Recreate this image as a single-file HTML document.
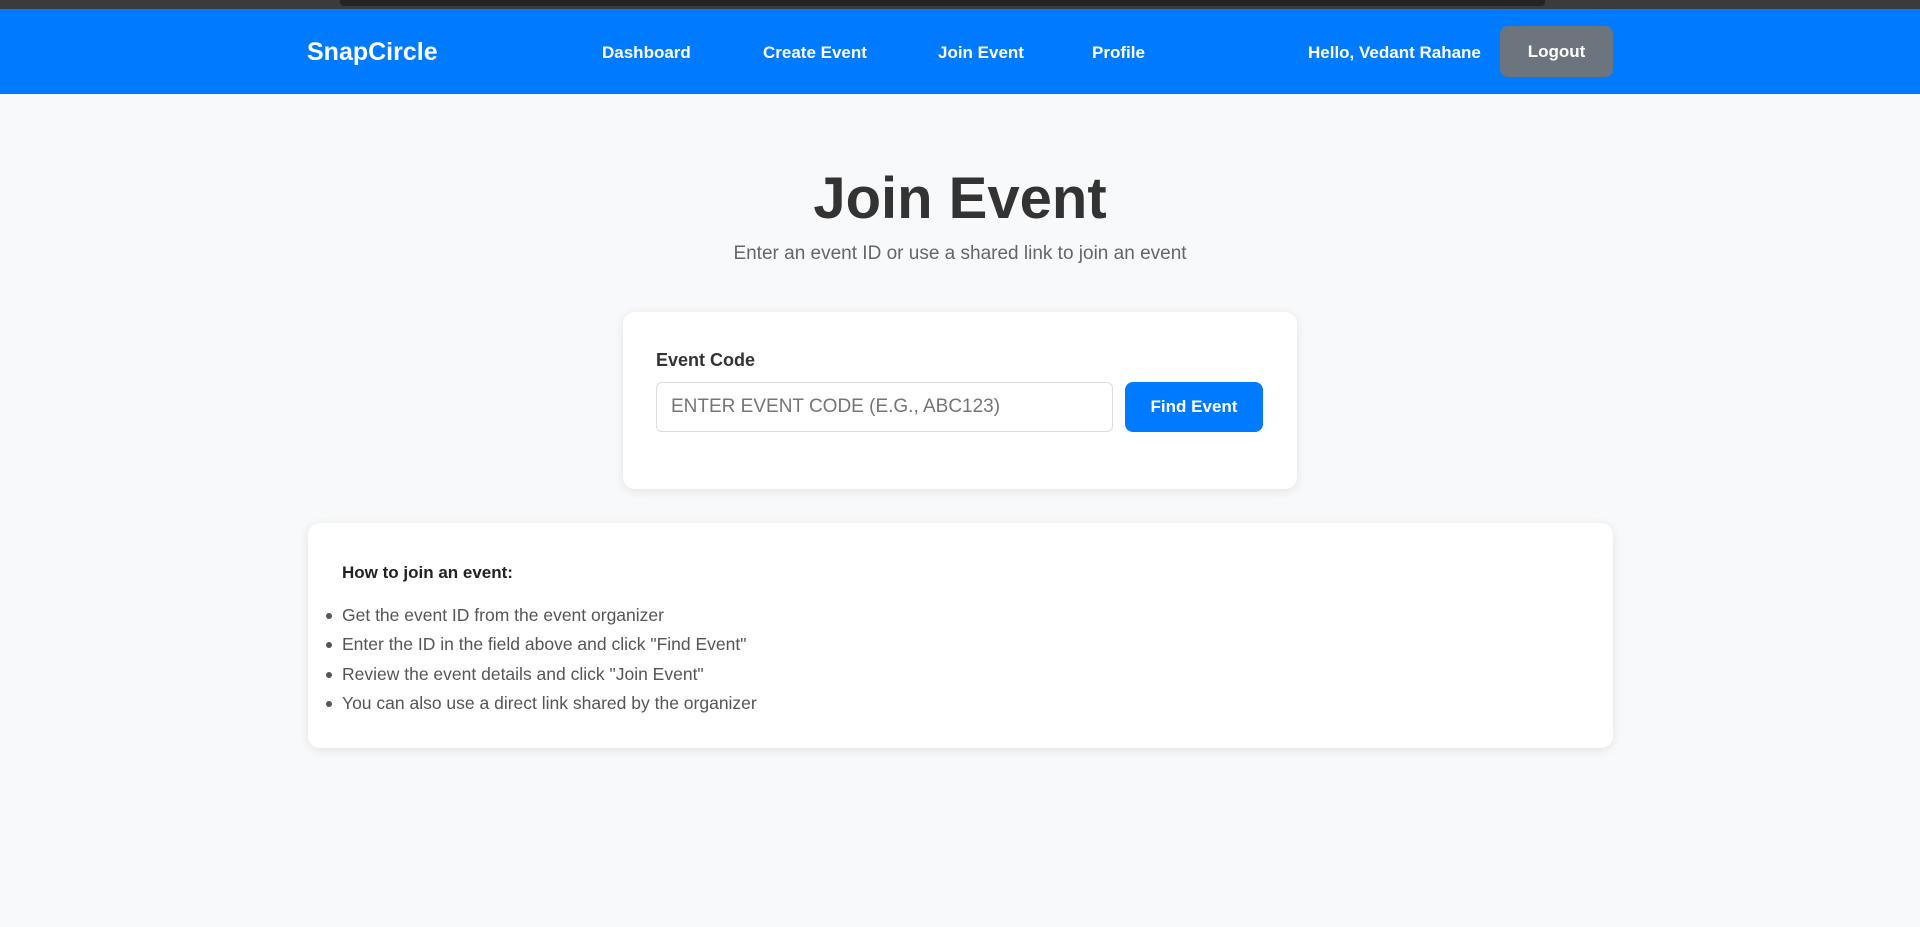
<!DOCTYPE html>
<html><head><meta charset="utf-8"><style>
*{box-sizing:border-box;margin:0;padding:0}
body{width:1920px;height:927px;overflow:hidden;background:#f8f9fa;font-family:"Liberation Sans",Arial,sans-serif;position:relative}
.top{position:absolute;left:0;top:0;width:1920px;height:9px;background:#3b3a3e}
.top i{position:absolute;left:340px;top:0;width:1205px;height:6px;background:#242327;border-radius:0 0 4px 4px}
nav{position:absolute;left:0;top:9px;width:1920px;height:85px;background:#007bff;color:#fff}
nav .a{position:absolute;top:1px;line-height:85px;font-weight:bold;font-size:17px}
.logo{position:absolute;left:307px;top:1px;line-height:85px;font-weight:bold;font-size:25px}
.btn{position:absolute;left:1500px;top:17px;width:113px;height:51px;background:#6c757d;border-radius:8px;text-align:center;line-height:51px;font-weight:bold;font-size:17px}
h1{position:absolute;left:0;width:1920px;top:163px;text-align:center;font-size:58px;color:#333;font-weight:bold;line-height:72px}
.sub{position:absolute;left:0;width:1920px;top:243px;text-align:center;font-size:19px;color:#666}
.card{position:absolute;background:#fff;border-radius:12px;box-shadow:0 2px 10px rgba(0,0,0,.09)}
.lbl{position:absolute;left:33px;top:38px;font-size:18px;font-weight:bold;color:#333}
.inp{position:absolute;left:33px;top:70px;width:457px;height:50px;border:1px solid #ddd;border-radius:6px;font-size:19px;color:#757575;line-height:48px;padding-left:14px}
.fb{position:absolute;left:502px;top:70px;width:138px;height:50px;background:#007bff;border-radius:8px;color:#fff;font-weight:bold;font-size:17px;text-align:center;line-height:50px}
.h{position:absolute;left:34px;top:40px;font-size:17px;font-weight:bold;color:#222}
ul{position:absolute;left:34px;top:78px;list-style:none;font-size:17.5px;color:#555}
li{height:29.3px;line-height:29px;position:relative}
li:before{content:"";position:absolute;left:-16px;top:12px;width:6px;height:6px;border-radius:50%;background:#555}
</style></head><body>
<div class="top"><i></i></div>
<nav>
<div class="logo">SnapCircle</div>
<div class="a" style="left:602px">Dashboard</div>
<div class="a" style="left:763px">Create Event</div>
<div class="a" style="left:938px">Join Event</div>
<div class="a" style="left:1092px">Profile</div>
<div class="a" style="left:1308px">Hello, Vedant Rahane</div>
<div class="btn">Logout</div>
</nav>
<h1>Join Event</h1>
<div class="sub">Enter an event ID or use a shared link to join an event</div>
<div class="card" style="left:623px;top:312px;width:674px;height:177px">
<div class="lbl">Event Code</div>
<div class="inp">ENTER EVENT CODE (E.G., ABC123)</div>
<div class="fb">Find Event</div>
</div>
<div class="card" style="left:308px;top:523px;width:1305px;height:225px">
<div class="h">How to join an event:</div>
<ul>
<li>Get the event ID from the event organizer</li>
<li>Enter the ID in the field above and click "Find Event"</li>
<li>Review the event details and click "Join Event"</li>
<li>You can also use a direct link shared by the organizer</li>
</ul>
</div>
</body></html>
